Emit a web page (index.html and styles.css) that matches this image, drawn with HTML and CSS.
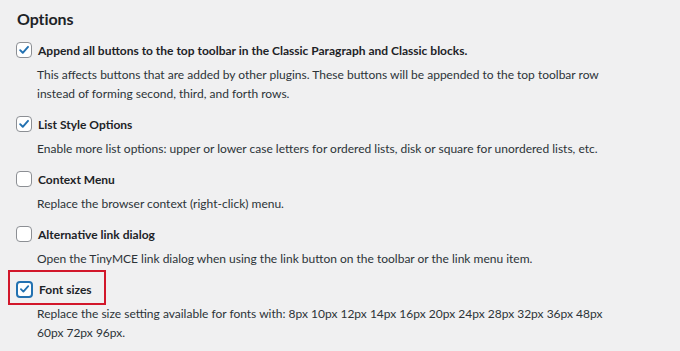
FILE: index.html
```html
<!DOCTYPE html>
<html lang="en">
<head>
<meta charset="utf-8">
<title>Options</title>
<link rel="stylesheet" href="styles.css">
</head>
<body>
<div class="wrap">
  <h2 class="title">Options</h2>
  <div class="options">
    <div class="option">
      <label class="opt-label">
        <span class="cb checked"><svg viewBox="0 0 16 16" width="16" height="16"><path d="M3.6 8.2 L6.6 11.2 L12.6 4.4" fill="none" stroke="#2271b1" stroke-width="2.2" stroke-linecap="round" stroke-linejoin="round"/></svg></span>
        <span class="opt-text">Append all buttons to the top toolbar in the Classic Paragraph and Classic blocks.</span>
      </label>
      <p class="desc">This affects buttons that are added by other plugins. These buttons will be appended to the top toolbar row instead of forming second, third, and forth rows.</p>
    </div>
    <div class="option">
      <label class="opt-label">
        <span class="cb checked"><svg viewBox="0 0 16 16" width="16" height="16"><path d="M3.6 8.2 L6.6 11.2 L12.6 4.4" fill="none" stroke="#2271b1" stroke-width="2.2" stroke-linecap="round" stroke-linejoin="round"/></svg></span>
        <span class="opt-text">List Style Options</span>
      </label>
      <p class="desc">Enable more list options: upper or lower case letters for ordered lists, disk or square for unordered lists, etc.</p>
    </div>
    <div class="option">
      <label class="opt-label">
        <span class="cb"></span>
        <span class="opt-text">Context Menu</span>
      </label>
      <p class="desc">Replace the browser context (right-click) menu.</p>
    </div>
    <div class="option">
      <label class="opt-label">
        <span class="cb"></span>
        <span class="opt-text">Alternative link dialog</span>
      </label>
      <p class="desc">Open the TinyMCE link dialog when using the link button on the toolbar or the link menu item.</p>
    </div>
    <div class="option">
      <label class="opt-label highlighted">
        <span class="cb checked focused"><svg viewBox="0 0 16 16" width="16" height="16"><path d="M3.6 8.2 L6.6 11.2 L12.6 4.4" fill="none" stroke="#2271b1" stroke-width="2.2" stroke-linecap="round" stroke-linejoin="round"/></svg></span>
        <span class="opt-text">Font sizes</span>
      </label>
      <p class="desc">Replace the size setting available for fonts with: 8px 10px 12px 14px 16px 20px 24px 28px 32px 36px 48px 60px 72px 96px.</p>
    </div>
  </div>
</div>
</body>
</html>
```
FILE: styles.css
```css
html, body {
  margin: 0;
  padding: 0;
  background: #f0f0f1;
}
body {
  font-family: Lato, "Open Sans", sans-serif;
  color: #1d2327;
  font-size: 12px;
}
.wrap {
  padding: 0 0 0 16px;
}
.title {
  font-size: 16px;
  font-weight: 700;
  line-height: 22px;
  letter-spacing: -0.1px;
  margin: 0;
  padding: 8px 0 0 1px;
  color: #1d2327;
}
.options {
  margin-top: 10px;
}
.option {
  padding-bottom: 11px;
}
.opt-label {
  display: flex;
  align-items: center;
  gap: 6px;
  height: 20px;
  position: relative;
}
.opt-text {
  font-weight: 700;
}
.cb {
  width: 14px;
  height: 14px;
  border: 1px solid #8c8f94;
  border-radius: 4px;
  background: #fff;
  display: flex;
  align-items: center;
  justify-content: center;
  flex: none;
}
.cb svg {
  display: block;
}
.cb.focused {
  border: 2px solid #2271b1;
  width: 13px;
  height: 13px;
}
.highlighted::before {
  content: "";
  position: absolute;
  box-sizing: border-box;
  left: -8px;
  top: -9px;
  width: 98px;
  height: 35px;
  border: 2px solid #d2172b;
}
.desc {
  margin: 5px 0 0 21px;
  line-height: 19px;
  color: #2c3338;
  max-width: 570px;
}
```
